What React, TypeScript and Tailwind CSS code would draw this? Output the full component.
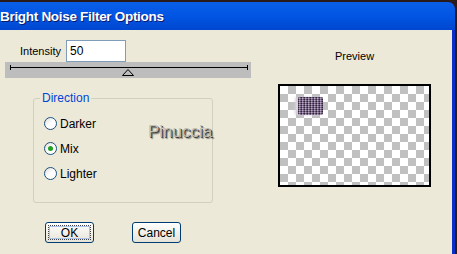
import React from 'react';

const ui = { fontFamily: '"Liberation Sans", Arial, sans-serif' };

function Radio({ label, checked }: { label: string; checked?: boolean }) {
  return (
    <div className="flex items-center h-[13px] gap-[3px]">
      <span className="relative w-[13px] h-[13px] rounded-full border border-[#1c5180] bg-gradient-to-br from-[#dcdcd6] via-white to-white flex items-center justify-center">
        {checked && <span className="w-[5px] h-[5px] rounded-full bg-[#21a121]" />}
      </span>
      <span className="text-[12px] leading-none text-black">{label}</span>
    </div>
  );
}

function Button({ label, focused }: { label: string; focused?: boolean }) {
  return (
    <button className="w-[49px] h-[21px] rounded-[3px] border border-[#003c74] bg-gradient-to-b from-white to-[#e6e3d6] text-[12px] leading-none text-black flex items-center justify-center p-[2px]">
      <span
        className={`w-full h-full flex items-center justify-center ${focused ? 'border border-dotted border-[#444] shadow-[inset_0_0_0_1px_#a9c3ec]' : ''}`}
      >
        {label}
      </span>
    </button>
  );
}

export default function App() {
  return (
    <div className="w-[457px] h-[254px] bg-[#2a1a1a] overflow-hidden flex flex-col pt-[2px]" style={ui}>
      {/* Title bar */}
      <div className="w-[455px] h-[28px] rounded-tr-[7px] bg-gradient-to-b from-[#0a5fe8] via-[#0255e3] to-[#0047d0] flex items-center pt-[2px]">
        <span className="text-white font-bold text-[13.5px] tracking-[-0.3px] [text-shadow:1px_1px_0_#0a1a6a]">
          Bright Noise Filter Options
        </span>
      </div>

      {/* Body */}
      <div className="w-[455px] flex-1 flex border-r-[3px] border-[#0a2fc8]">
        <div className="relative flex-1 bg-[#ece9d8] flex">
          {/* Left column */}
          <div className="w-[270px] flex flex-col">
            <div className="flex items-center mt-[10px] h-[22px]">
              <span className="ml-[20px] text-[11px] text-black">Intensity</span>
              <div className="ml-[5px] w-[60px] h-[22px] bg-white border border-[#7f9db9] flex items-center pl-[3px] text-[12px] text-black">
                50
              </div>
            </div>

            {/* Slider */}
            <div className="relative ml-[5px] w-[246px] h-[16px] bg-[#bdbdbd]">
              <div className="absolute left-[5px] right-[3px] top-[5px] h-[1px] bg-black" />
              <div className="absolute left-[5px] top-[3px] w-[1px] h-[5px] bg-black" />
              <div className="absolute right-[3px] top-[3px] w-[1px] h-[5px] bg-black" />
              <svg className="absolute left-[117px] top-[7px]" width="12" height="7" viewBox="0 0 12 7">
                <path d="M6 0.5 L11.5 6.5 L0.5 6.5 Z" fill="#bdbdbd" stroke="#000" strokeWidth="1" />
              </svg>
            </div>

            {/* Direction group */}
            <div className="relative ml-[33px] mt-[20px] w-[180px] h-[105px] border border-[#d0d0bf] rounded-[3px] flex flex-col gap-[12px] pl-[10px] pt-[18px]">
              <span className="absolute -top-[7px] left-[6px] px-[2px] bg-[#ece9d8] text-[12px] leading-none text-[#0046d5]">
                Direction
              </span>
              <Radio label="Darker" />
              <Radio label="Mix" checked />
              <Radio label="Lighter" />
            </div>

            {/* Buttons */}
            <div className="flex ml-[45px] mt-[19px] gap-[38px]">
              <Button label="OK" focused />
              <Button label="Cancel" />
            </div>
          </div>

          {/* Right column */}
          <div className="flex flex-col">
            <div className="ml-[65px] mt-[21px] text-[11px] leading-none text-black">Preview</div>
            <div className="relative ml-[8px] mt-[22px] w-[153px] h-[103px] border-2 border-black bg-white bg-[repeating-conic-gradient(#c0c0c0_0_25%,#ffffff_0_50%)] bg-[length:16px_16px]">
              <div className="absolute left-[18px] top-[11px] w-[25px] h-[18px] rounded-[2px] bg-[repeating-linear-gradient(90deg,#3a2a44_0_1px,#a58cb4_1px_2px,#6e5680_2px_3px)] shadow-[-3px_0_3px_#d8d0dc]">
                <div className="w-full h-full bg-[repeating-linear-gradient(0deg,rgba(255,255,255,0.25)_0_1px,rgba(0,0,0,0.2)_1px_2px)]" />
              </div>
            </div>
          </div>

          {/* Watermark */}
          <span className="absolute left-[148px] top-[89px] text-[17px] text-[#c0bdb0] [text-shadow:1px_1px_0_#3c3c3c,2px_2px_1px_#8a877c]">
            Pinuccia
          </span>
        </div>
      </div>
    </div>
  );
}
